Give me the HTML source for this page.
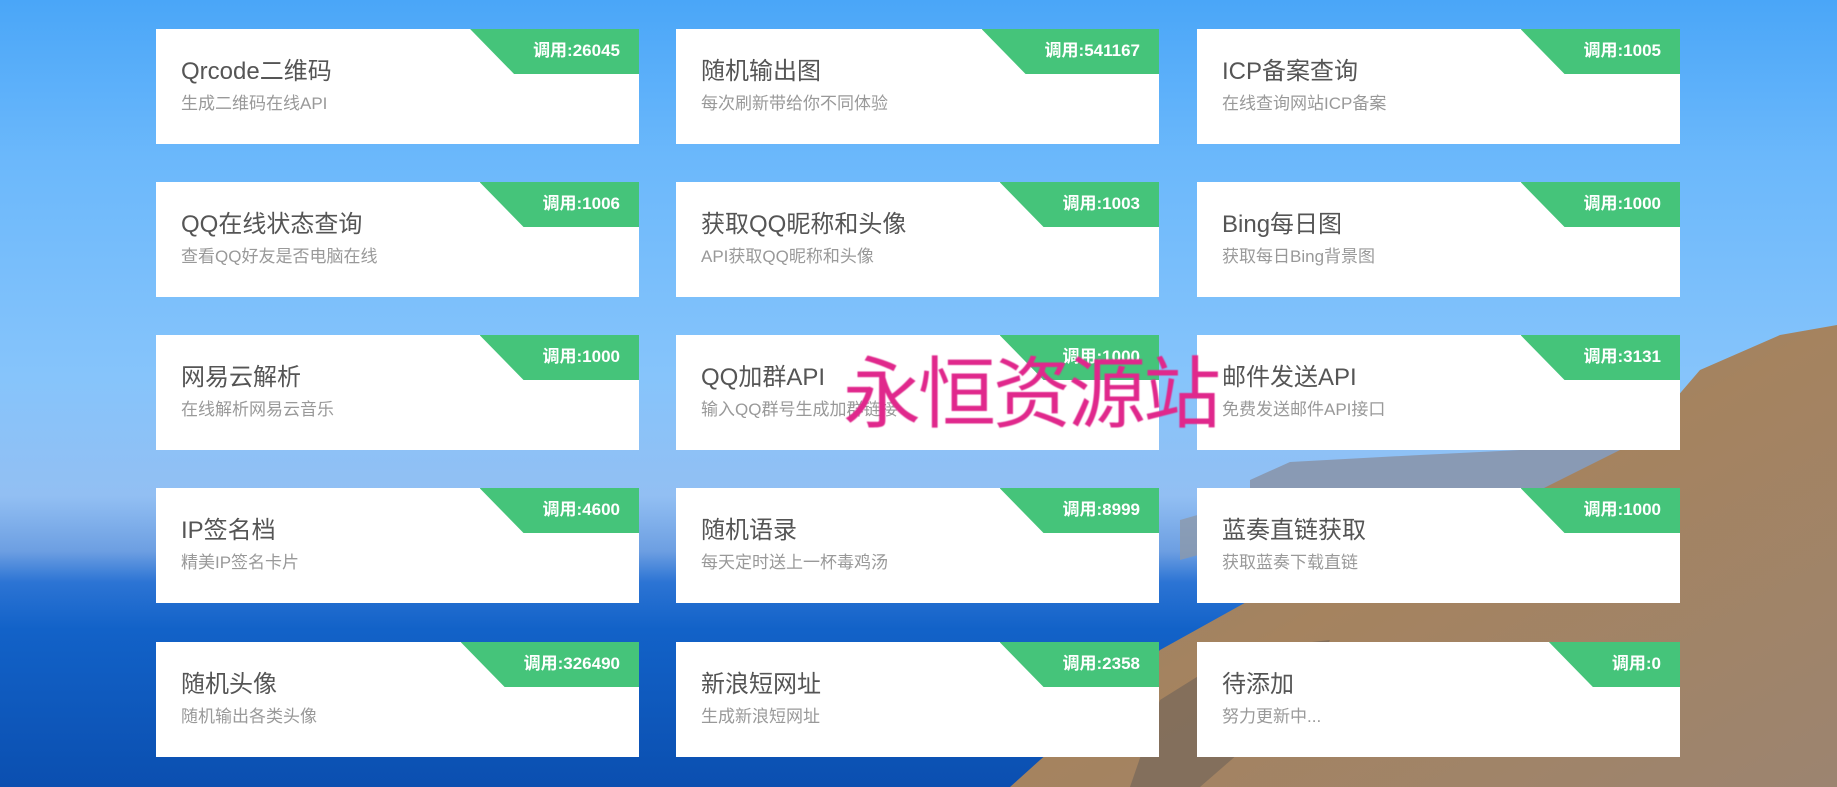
<!DOCTYPE html>
<html><head><meta charset="utf-8"><style>
*{margin:0;padding:0;box-sizing:border-box}
html,body{width:1837px;height:787px;overflow:hidden}
body{position:relative;font-family:"Liberation Sans","Noto Sans CJK SC",sans-serif;
background:linear-gradient(180deg,#4aa6f8 0%,#6bb8fb 20%,#86c4fb 48%,#92bff3 63%,#6d9fe2 70%,#2c74d4 74%,#1262c8 80%,#0b4fb0 100%);}
.bg{position:absolute;left:0;top:0}
.card{position:absolute;width:483px;height:115px;background:#fff;overflow:hidden}
.t{position:absolute;left:25px;top:28px;font-size:24px;color:#555;line-height:30px;white-space:nowrap}
.s{position:absolute;left:25px;top:64px;font-size:17px;color:#999;line-height:22px;white-space:nowrap}
.b{position:absolute;right:0;top:0;height:45px;background:#45c47a;color:#fff;font-weight:bold;font-size:17px;line-height:43px;padding:0 19px 0 63px;clip-path:polygon(0 0,100% 0,100% 100%,44px 100%);white-space:nowrap}
.wm{position:absolute;left:843px;top:340px;font-size:78px;color:#e0288c;font-weight:normal;letter-spacing:-3px;font-family:"Noto Sans CJK SC",sans-serif;line-height:96px;white-space:nowrap;filter:blur(.6px)}
</style></head><body>
<svg class="bg" width="1837" height="787">
<defs><linearGradient id="r" x1="0" y1="0" x2="1" y2="1"><stop offset="0" stop-color="#8f8070"/><stop offset=".5" stop-color="#a5835f"/><stop offset="1" stop-color="#9c8470"/></linearGradient></defs>
<polygon points="1250,480 1290,462 1420,455 1560,448 1680,440 1680,540 1250,540" fill="#8893a8" opacity=".85"/>
<polygon points="1180,520 1250,500 1290,530 1180,560" fill="#8c98aa" opacity=".8"/>
<polygon points="1700,370 1780,335 1837,325 1837,787 1010,787 1040,760 1110,700 1160,650 1250,600 1330,560 1420,530 1540,490 1640,440" fill="url(#r)"/>
<polygon points="1160,700 1240,650 1330,640 1300,700 1200,787 1130,787" fill="#6e6258" opacity=".6"/>
</svg>

<div class="card" style="left:156px;top:29px"><div class="t">Qrcode二维码</div><div class="s">生成二维码在线API</div><div class="b">调用:26045</div></div>
<div class="card" style="left:676px;top:29px"><div class="t">随机输出图</div><div class="s">每次刷新带给你不同体验</div><div class="b">调用:541167</div></div>
<div class="card" style="left:1197px;top:29px"><div class="t">ICP备案查询</div><div class="s">在线查询网站ICP备案</div><div class="b">调用:1005</div></div>

<div class="card" style="left:156px;top:182px"><div class="t">QQ在线状态查询</div><div class="s">查看QQ好友是否电脑在线</div><div class="b">调用:1006</div></div>
<div class="card" style="left:676px;top:182px"><div class="t">获取QQ昵称和头像</div><div class="s">API获取QQ昵称和头像</div><div class="b">调用:1003</div></div>
<div class="card" style="left:1197px;top:182px"><div class="t">Bing每日图</div><div class="s">获取每日Bing背景图</div><div class="b">调用:1000</div></div>

<div class="card" style="left:156px;top:335px"><div class="t">网易云解析</div><div class="s">在线解析网易云音乐</div><div class="b">调用:1000</div></div>
<div class="card" style="left:676px;top:335px"><div class="t">QQ加群API</div><div class="s">输入QQ群号生成加群链接</div><div class="b">调用:1000</div></div>
<div class="card" style="left:1197px;top:335px"><div class="t">邮件发送API</div><div class="s">免费发送邮件API接口</div><div class="b">调用:3131</div></div>

<div class="card" style="left:156px;top:488px"><div class="t">IP签名档</div><div class="s">精美IP签名卡片</div><div class="b">调用:4600</div></div>
<div class="card" style="left:676px;top:488px"><div class="t">随机语录</div><div class="s">每天定时送上一杯毒鸡汤</div><div class="b">调用:8999</div></div>
<div class="card" style="left:1197px;top:488px"><div class="t">蓝奏直链获取</div><div class="s">获取蓝奏下载直链</div><div class="b">调用:1000</div></div>

<div class="card" style="left:156px;top:642px"><div class="t">随机头像</div><div class="s">随机输出各类头像</div><div class="b">调用:326490</div></div>
<div class="card" style="left:676px;top:642px"><div class="t">新浪短网址</div><div class="s">生成新浪短网址</div><div class="b">调用:2358</div></div>
<div class="card" style="left:1197px;top:642px"><div class="t">待添加</div><div class="s">努力更新中...</div><div class="b">调用:0</div></div>

<div class="wm">永恒资源站</div>
</body></html>
